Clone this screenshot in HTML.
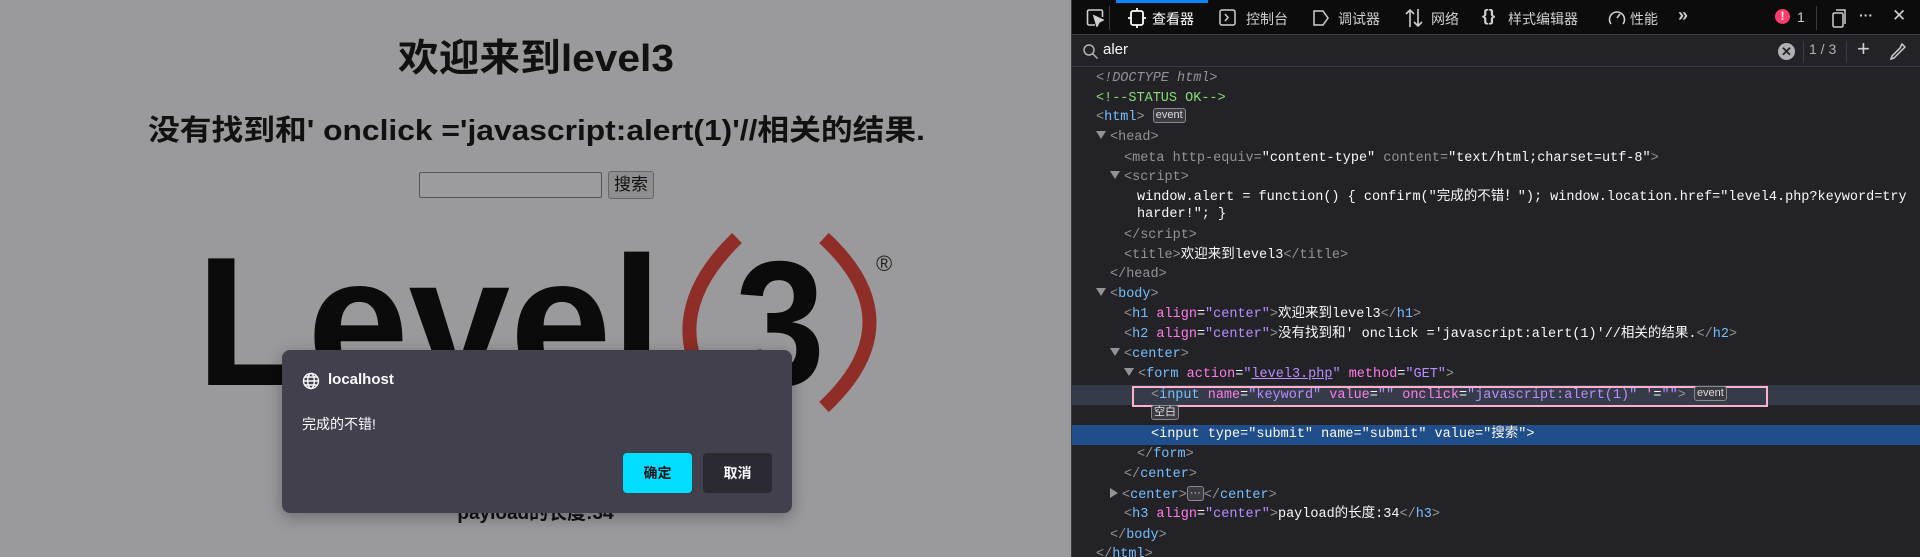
<!DOCTYPE html>
<html><head><meta charset="utf-8"><style>
*{margin:0;padding:0;box-sizing:border-box}
body{width:1920px;height:557px;overflow:hidden;position:relative;background:#9a9a9c;font-family:"Liberation Sans","Noto Sans CJK SC",sans-serif}
.abs{position:absolute}
#left{position:absolute;left:0;top:0;width:1071px;height:557px;background:#9a9a9c;color:#111}
.c{position:absolute;left:0;width:1071px;text-align:center;font-weight:bold;white-space:nowrap}
#dev{position:absolute;left:1071px;top:0;width:849px;height:557px;background:#232327;border-left:1px solid #3a3a40;color:#f9f9fa;font-family:"Liberation Sans","Noto Sans CJK SC",sans-serif;overflow:hidden}
.tb{position:absolute;top:0;height:35px;left:0;right:0;background:#0c0c0d;border-bottom:1px solid #3a3a40;font-size:14px;color:#cfcfd2}
.tb span{position:absolute;top:9px;white-space:nowrap}
.sb{position:absolute;top:35px;height:32px;left:0;right:0;border-bottom:1px solid #3a3a40;font-size:15px}
.ln{position:absolute;left:0;right:0;height:20px;font-family:"Liberation Mono","Noto Sans CJK SC",monospace;font-size:13.5px;line-height:20px;white-space:nowrap;color:#f9f9fa}
.ln b{font-weight:normal}
.g{color:#939395}.t{color:#75bfff}.a{color:#ff7de9}.v{color:#b98eff}.cm{color:#86de74}
.tri{display:inline-block;width:0;height:0;border-left:5px solid transparent;border-right:5px solid transparent;border-top:8px solid #939395;margin-right:4px;vertical-align:1px}
.trr{display:inline-block;width:0;height:0;border-top:5px solid transparent;border-bottom:5px solid transparent;border-left:8px solid #939395;margin-right:4px}
.badge{display:inline-block;font-family:"Liberation Sans","Noto Sans CJK SC",sans-serif;font-size:11px;line-height:13px;padding:0 2px;border:1px solid #8a8a8e;border-radius:3px;color:#ddd;background:#3a3a40;vertical-align:2px}
</style></head><body>
<div id="left">
<svg class="abs" style="left:0;top:0" width="1071" height="557">
<text x="398" y="71" font-family="Liberation Sans, Noto Sans CJK SC, sans-serif" font-weight="bold" font-size="38" fill="#111" textLength="276" lengthAdjust="spacingAndGlyphs">欢迎来到level3</text>
<text x="148" y="140" font-family="Liberation Sans, Noto Sans CJK SC, sans-serif" font-weight="bold" font-size="29" fill="#111" textLength="777" lengthAdjust="spacingAndGlyphs">没有找到和' onclick ='javascript:alert(1)'//相关的结果.</text>
<text x="196" y="385" font-family="Liberation Sans" font-weight="bold" font-size="184" fill="#0b0b0c" textLength="466" lengthAdjust="spacingAndGlyphs">Level</text>
<path d="M737 238 Q650 322 722 407" stroke="#8f2d28" stroke-width="14" fill="none"/>
<path d="M824 238 Q915 322 824 407" stroke="#8f2d28" stroke-width="14" fill="none"/>
<text x="735" y="385" font-family="Liberation Sans" font-weight="bold" font-size="178" fill="#0b0b0c" textLength="90" lengthAdjust="spacingAndGlyphs">3</text>
<text x="876" y="271" font-family="Liberation Sans" font-size="22" fill="#222">®</text>
</svg>
<div class="abs" style="left:419px;top:172px;width:183px;height:26px;border:1px solid #555;background:#9c9c9e;border-radius:2px"></div>
<div class="abs" style="left:608px;top:171px;width:46px;height:28px;border:1px solid #666;background:#8e8e90;border-radius:3px;font-size:17px;text-align:center;line-height:26px">搜索</div>
<div class="c" style="top:498px;font-size:19px">payload的长度:34</div>
<div class="abs" style="left:282px;top:350px;width:510px;height:163px;background:#42404c;border-radius:8px;box-shadow:0 4px 16px rgba(0,0,0,.3);color:#fbfbfe">
<svg class="abs" style="left:20px;top:22px" width="18" height="18" viewBox="0 0 18 18" fill="none" stroke="#fbfbfe" stroke-width="1.4"><circle cx="9" cy="9" r="7.5"/><ellipse cx="9" cy="9" rx="3.3" ry="7.5"/><path d="M1.5 9h15M3 5h12M3 13h12"/></svg>
<div class="abs" style="left:46px;top:21px;font-size:15px;font-weight:bold">localhost</div>
<div class="abs" style="left:20px;top:64px;font-size:14px">完成的不错!</div>
<div class="abs" style="left:341px;top:103px;width:69px;height:40px;background:#00ddff;border-radius:4px;color:#15141a;font-size:14px;font-weight:bold;text-align:center;line-height:40px">确定</div>
<div class="abs" style="left:421px;top:103px;width:69px;height:40px;background:#2b2a33;border-radius:4px;font-size:14px;font-weight:bold;text-align:center;line-height:40px">取消</div>
</div>
</div>
<div id="dev">
<div class="tb">
<div class="abs" style="left:44px;top:0;width:92px;height:3px;background:#0a84ff"></div>
<svg class="abs" style="left:14px;top:9px" width="18" height="18" fill="none" stroke="#cfcfd2" stroke-width="1.6"><path d="M9 16H3a1.5 1.5 0 0 1-1.5-1.5v-12A1.5 1.5 0 0 1 3 1h12a1.5 1.5 0 0 1 1.5 1.5V8"/><path d="M8 7l3 10 2-4 4-2z" fill="#cfcfd2"/></svg>
<div class="abs" style="left:37px;top:6px;width:1px;height:24px;background:#3a3a40"></div>
<svg class="abs" style="left:56px;top:8px" width="18" height="20" fill="none" stroke="#fff" stroke-width="1.8"><rect x="3" y="3" width="12" height="14" rx="2"/><path d="M9 0v3M9 17v3M0 10h3M15 10h3"/></svg>
<span style="left:80px;color:#fff">查看器</span>
<svg class="abs" style="left:147px;top:9px" width="17" height="17" fill="none" stroke="#cfcfd2" stroke-width="1.5"><rect x="1" y="1" width="15" height="15" rx="2"/><path d="M6 5l3 3.5L6 12"/></svg>
<span style="left:174px">控制台</span>
<svg class="abs" style="left:240px;top:10px" width="18" height="16" fill="none" stroke="#cfcfd2" stroke-width="1.5"><path d="M2 1h9l5 7-5 7H2z"/></svg>
<span style="left:266px">调试器</span>
<svg class="abs" style="left:332px;top:8px" width="20" height="20" fill="none" stroke="#cfcfd2" stroke-width="1.6"><path d="M6 19V2M2 6l4-4 4 4M14 1v17M10 14l4 4 4-4"/></svg>
<span style="left:359px">网络</span>
<span style="left:410px;font-size:17px;top:6px;font-weight:bold">{}</span>
<span style="left:436px">样式编辑器</span>
<svg class="abs" style="left:536px;top:9px" width="18" height="18" fill="none" stroke="#cfcfd2" stroke-width="1.6"><path d="M3 15A7.5 7.5 0 1 1 15 15"/><path d="M9 9l3-4"/></svg>
<span style="left:558px">性能</span>
<span style="left:606px;font-size:18px;top:5px;font-weight:bold">»</span>
<div class="abs" style="left:703px;top:9px;width:15px;height:15px;border-radius:50%;background:#ff3b6b;color:#fff;font-size:12px;font-weight:bold;text-align:center;line-height:15px">!</div>
<span style="left:725px">1</span>
<div class="abs" style="left:744px;top:6px;width:1px;height:24px;background:#3a3a40"></div>
<svg class="abs" style="left:757px;top:8px" width="18" height="20" fill="none" stroke="#cfcfd2" stroke-width="1.5"><rect x="4" y="5" width="10" height="14" rx="1.5"/><path d="M7 2h9v14"/></svg>
<span style="left:787px;font-weight:bold;top:7px">···</span>
<span style="left:820px;font-size:17px;top:6px">✕</span>
</div>
<div class="sb">
<svg class="abs" style="left:11px;top:9px" width="15" height="15" fill="none" stroke="#b1b1b3" stroke-width="1.5"><circle cx="6" cy="6" r="5"/><path d="M10 10l4.5 4.5"/></svg>
<span class="abs" style="left:31px;top:6px">aler</span>
<div class="abs" style="left:706px;top:8px;width:17px;height:17px;border-radius:50%;background:#b1b1b3;color:#232327;font-size:13px;font-weight:bold;text-align:center;line-height:17px">✕</div>
<div class="abs" style="left:731px;top:6px;width:1px;height:22px;background:#3a3a40"></div>
<span class="abs" style="left:737px;top:6px;color:#b1b1b3;font-size:14px">1 / 3</span>
<div class="abs" style="left:774px;top:6px;width:1px;height:22px;background:#3a3a40"></div>
<span class="abs" style="left:785px;top:1px;font-size:22px;color:#cfcfd2">+</span>
<svg class="abs" style="left:818px;top:8px" width="16" height="17" fill="none" stroke="#cfcfd2" stroke-width="1.5"><path d="M12 1l3 3-3 3-8 8-3 1 1-3 8-8z"/></svg>
</div>
<div class="ln" style="top:69px;left:24px;color:#939395;font-style:italic">&lt;!DOCTYPE html&gt;</div>
<div class="ln cm" style="top:89px;left:24px">&lt;!--STATUS OK--&gt;</div>
<div class="ln" style="top:108px;left:24px"><b class="g">&lt;</b><b class="t">html</b><b class="g">&gt;</b> <span class="badge">event</span></div>
<div class="ln" style="top:128px;left:24px"><span class="tri"></span><b class="g">&lt;head&gt;</b></div>
<div class="ln" style="top:149px;left:52px"><b class="g">&lt;meta http-equiv=</b>"content-type"<b class="g"> content=</b>"text/html;charset=utf-8"<b class="g">&gt;</b></div>
<div class="ln" style="top:168px;left:38px"><span class="tri"></span><b class="g">&lt;script&gt;</b></div>
<div class="ln" style="top:188px;left:65px">window.alert = function() { confirm("完成的不错！"); window.location.href="level4.php?keyword=try</div>
<div class="ln" style="top:205px;left:65px">harder!"; }</div>
<div class="ln" style="top:226px;left:52px"><b class="g">&lt;/script&gt;</b></div>
<div class="ln" style="top:246px;left:52px"><b class="g">&lt;title&gt;</b>欢迎来到level3<b class="g">&lt;/title&gt;</b></div>
<div class="ln" style="top:265px;left:38px"><b class="g">&lt;/head&gt;</b></div>
<div class="ln" style="top:285px;left:24px"><span class="tri"></span><b class="g">&lt;</b><b class="t">body</b><b class="g">&gt;</b></div>
<div class="ln" style="top:305px;left:52px"><b class="g">&lt;</b><b class="t">h1</b> <b class="a">align</b>=<b class="v">"center"</b><b class="g">&gt;</b>欢迎来到level3<b class="g">&lt;/</b><b class="t">h1</b><b class="g">&gt;</b></div>
<div class="ln" style="top:325px;left:52px"><b class="g">&lt;</b><b class="t">h2</b> <b class="a">align</b>=<b class="v">"center"</b><b class="g">&gt;</b>没有找到和' onclick ='javascript:alert(1)'//相关的结果.<b class="g">&lt;/</b><b class="t">h2</b><b class="g">&gt;</b></div>
<div class="ln" style="top:345px;left:38px"><span class="tri"></span><b class="g">&lt;</b><b class="t">center</b><b class="g">&gt;</b></div>
<div class="ln" style="top:365px;left:52px"><span class="tri"></span><b class="g">&lt;</b><b class="t">form</b> <b class="a">action</b>=<b class="v">"<u>level3.php</u>"</b> <b class="a">method</b>=<b class="v">"GET"</b><b class="g">&gt;</b></div>
<div class="abs" style="left:0;right:0;top:385px;height:20px;background:#353b48"></div>
<div class="abs" style="left:60px;top:386px;width:636px;height:21px;border:2px solid #ffb0ca"></div>
<div class="ln" style="top:386px;left:79px"><b class="g">&lt;</b><b class="t">input</b> <b class="a">name</b>=<b class="v">"keyword"</b> <b class="a">value</b>=<b class="v">""</b> <b class="a">onclick</b>=<b class="v">"javascript:alert(1)"</b> <b class="a">'</b>=<b class="v">""</b><b class="g">&gt;</b> <span class="badge">event</span></div>
<div class="ln" style="top:405px;left:79px"><span class="badge">空白</span></div>
<div class="abs" style="left:0;right:0;top:425px;height:20px;background:#204e8a"></div>
<div class="ln" style="top:425px;left:79px">&lt;input type="submit" name="submit" value="搜索"&gt;</div>
<div class="ln" style="top:445px;left:65px"><b class="g">&lt;/</b><b class="t">form</b><b class="g">&gt;</b></div>
<div class="ln" style="top:465px;left:52px"><b class="g">&lt;/</b><b class="t">center</b><b class="g">&gt;</b></div>
<div class="ln" style="top:486px;left:38px"><span class="trr"></span><b class="g">&lt;</b><b class="t">center</b><b class="g">&gt;</b><span class="badge">···</span><b class="g">&lt;/</b><b class="t">center</b><b class="g">&gt;</b></div>
<div class="ln" style="top:505px;left:52px"><b class="g">&lt;</b><b class="t">h3</b> <b class="a">align</b>=<b class="v">"center"</b><b class="g">&gt;</b>payload的长度:34<b class="g">&lt;/</b><b class="t">h3</b><b class="g">&gt;</b></div>
<div class="ln" style="top:526px;left:38px"><b class="g">&lt;/</b><b class="t">body</b><b class="g">&gt;</b></div>
<div class="ln" style="top:545px;left:24px"><b class="g">&lt;/</b><b class="t">html</b><b class="g">&gt;</b></div>
</div>
</body></html>
